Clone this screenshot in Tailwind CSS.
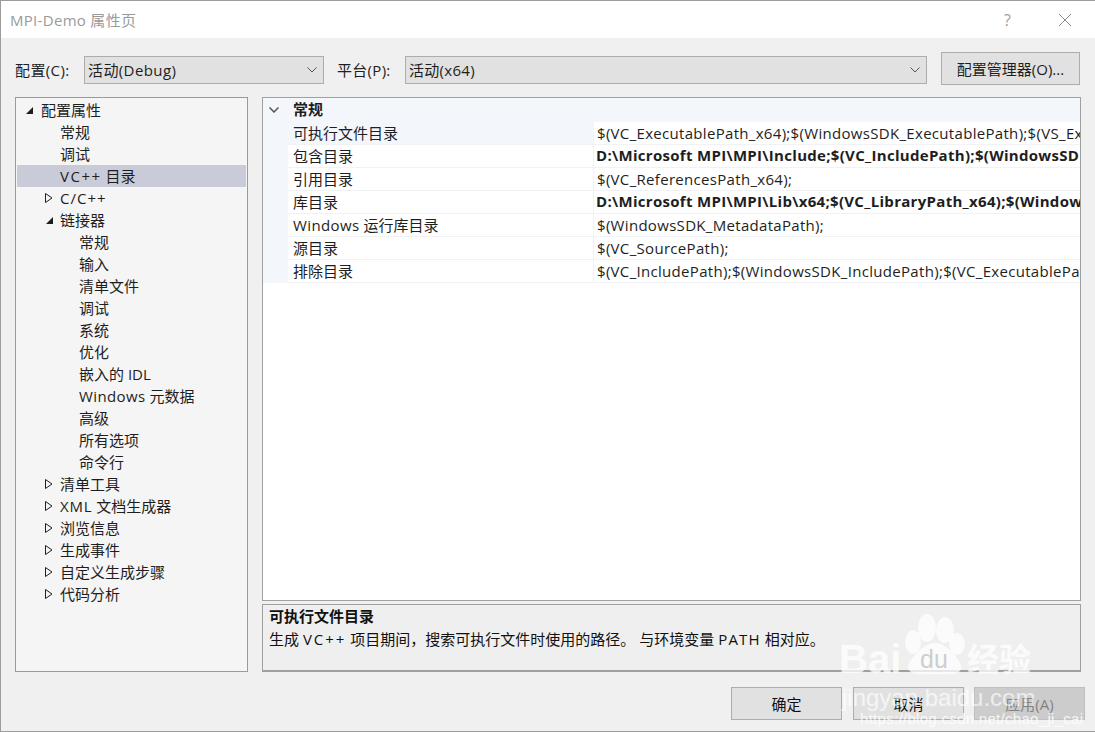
<!DOCTYPE html>
<html><head><meta charset="utf-8"><script src="https://cdn.jsdelivr.net/npm/@tailwindcss/browser@4"></script></head>
<body class="m-0">
<div class="relative w-[1095px] h-[732px] overflow-hidden bg-[#f0f0f0] border border-r-0 border-[#9c9c9c] text-[15px] leading-[22px] text-[#1e1e1e] font-['Open_Sans','Noto_Sans_CJK_SC',sans-serif] flex flex-col">
  <div class="h-[37px] shrink-0 bg-white flex items-center justify-between pl-[9px] pr-[23px]">
    <span class="text-[#9a9a9a] text-[15px] tracking-[0.3px]">MPI-Demo 属性页</span>
    <div class="flex items-center gap-[47px]">
      <span class="text-[#a0a0a0] text-[16px]">?</span>
      <svg class="w-[14px] h-[14px]" viewBox="0 0 14 14"><path d="M1 1 L13 13 M13 1 L1 13" stroke="#8a8a8a" stroke-width="1" fill="none"/></svg>
    </div>
  </div>
  <div class="h-[59px] shrink-0 flex items-center pl-[14px] pt-[4px]">
    <span class="w-[69px] tracking-[0.4px]">配置(C):</span>
    <div class="w-[240px] h-[28px] bg-[#e1e1e1] border border-[#adadad] flex items-center justify-between pl-[3px] pr-[6px]"><span class="tracking-[0.4px]">活动(Debug)</span><svg class="w-[10px] h-[6px]" viewBox="0 0 10 6"><path d="M.5 .5 L5 5 L9.5 .5" stroke="#555" fill="none"/></svg></div>
    <span class="w-[81px] pl-[13px] tracking-[0.3px]">平台(P):</span>
    <div class="w-[522px] h-[28px] bg-[#e1e1e1] border border-[#adadad] flex items-center justify-between pl-[3px] pr-[6px]"><span class="tracking-[0.3px]">活动(x64)</span><svg class="w-[10px] h-[6px]" viewBox="0 0 10 6"><path d="M.5 .5 L5 5 L9.5 .5" stroke="#555" fill="none"/></svg></div>
    <div class="ml-[14px] w-[139px] h-[33px] -mt-[2px] bg-[#e1e1e1] border border-[#adadad] flex items-center justify-center">配置管理器(O)...</div>
  </div>
  <div class="flex-1 flex pl-[14px] gap-[14px] h-[575px]">
    <div class="w-[233px] h-[575px] bg-[#f5f5f5] border border-[#9a9a9a] pt-[1px] pl-[1px] pr-[1px]">
      <div class="h-[22px] flex items-center pl-[8px]"><svg class="w-[9px] h-[9px]" viewBox="0 0 9 9"><path d="M8 1 V8 H1 Z" fill="#1e1e1e"/></svg><span class="ml-[7px]">配置属性</span></div>
      <div class="h-[22px] flex items-center pl-[43px]">常规</div>
      <div class="h-[22px] flex items-center pl-[43px]">调试</div>
      <div class="h-[22px] flex items-center pl-[43px] bg-[#c9cbd8]"><span><span class="tracking-[1.5px]">VC++</span> 目录</span></div>
      <div class="h-[22px] flex items-center pl-[28px]"><svg class="w-[8px] h-[10px]" viewBox="0 0 8 10"><path d="M.5 .5 L7 5 L.5 9.5 Z" stroke="#1e1e1e" fill="none"/></svg><span class="ml-[7px] tracking-[1px]">C/C++</span></div>
      <div class="h-[22px] flex items-center pl-[28px]"><svg class="w-[9px] h-[9px]" viewBox="0 0 9 9"><path d="M8 1 V8 H1 Z" fill="#1e1e1e"/></svg><span class="ml-[6px]">链接器</span></div>
      <div class="h-[22px] flex items-center pl-[62px]">常规</div>
      <div class="h-[22px] flex items-center pl-[62px]">输入</div>
      <div class="h-[22px] flex items-center pl-[62px]">清单文件</div>
      <div class="h-[22px] flex items-center pl-[62px]">调试</div>
      <div class="h-[22px] flex items-center pl-[62px]">系统</div>
      <div class="h-[22px] flex items-center pl-[62px]">优化</div>
      <div class="h-[22px] flex items-center pl-[62px]">嵌入的 IDL</div>
      <div class="h-[22px] flex items-center pl-[62px]"><span><span class="tracking-[0.4px]">Windows</span> 元数据</span></div>
      <div class="h-[22px] flex items-center pl-[62px]">高级</div>
      <div class="h-[22px] flex items-center pl-[62px]">所有选项</div>
      <div class="h-[22px] flex items-center pl-[62px]">命令行</div>
      <div class="h-[22px] flex items-center pl-[28px]"><svg class="w-[8px] h-[10px]" viewBox="0 0 8 10"><path d="M.5 .5 L7 5 L.5 9.5 Z" stroke="#1e1e1e" fill="none"/></svg><span class="ml-[7px]">清单工具</span></div>
      <div class="h-[22px] flex items-center pl-[28px]"><svg class="w-[8px] h-[10px]" viewBox="0 0 8 10"><path d="M.5 .5 L7 5 L.5 9.5 Z" stroke="#1e1e1e" fill="none"/></svg><span class="ml-[7px]"><span class="tracking-[0.8px]">XML</span> 文档生成器</span></div>
      <div class="h-[22px] flex items-center pl-[28px]"><svg class="w-[8px] h-[10px]" viewBox="0 0 8 10"><path d="M.5 .5 L7 5 L.5 9.5 Z" stroke="#1e1e1e" fill="none"/></svg><span class="ml-[7px]">浏览信息</span></div>
      <div class="h-[22px] flex items-center pl-[28px]"><svg class="w-[8px] h-[10px]" viewBox="0 0 8 10"><path d="M.5 .5 L7 5 L.5 9.5 Z" stroke="#1e1e1e" fill="none"/></svg><span class="ml-[7px]">生成事件</span></div>
      <div class="h-[22px] flex items-center pl-[28px]"><svg class="w-[8px] h-[10px]" viewBox="0 0 8 10"><path d="M.5 .5 L7 5 L.5 9.5 Z" stroke="#1e1e1e" fill="none"/></svg><span class="ml-[7px]">自定义生成步骤</span></div>
      <div class="h-[22px] flex items-center pl-[28px]"><svg class="w-[8px] h-[10px]" viewBox="0 0 8 10"><path d="M.5 .5 L7 5 L.5 9.5 Z" stroke="#1e1e1e" fill="none"/></svg><span class="ml-[7px]">代码分析</span></div>
    </div>
    <div class="w-[819px] flex flex-col gap-[3px]">
      <div class="h-[505px] bg-white border border-[#a0a0a0] overflow-hidden">
        <div class="flex h-[24px] bg-[#f3f6fb] items-center">
          <svg class="w-[10px] h-[6px] ml-[6px]" viewBox="0 0 10 6"><path d="M.5 .5 L5 5 L9.5 .5" stroke="#555" stroke-width="1.5" fill="none"/></svg>
          <span class="ml-[14px] font-bold -mt-[2px]">常规</span>
        </div>
        <div class="flex bg-[#f3f6fb]">
          <div class="w-[25px] shrink-0"></div>
          <div class="flex-1">
            <div class="flex h-[23px] border-b border-[#f0f2f6]"><div class="w-[305px] pl-[5px] bg-[#f3f6fb] shrink-0">可执行文件目录</div><div class="flex-1 bg-white pl-[3px] whitespace-nowrap overflow-hidden border-l border-[#f0f2f6] tracking-[0.31px]">$(VC_ExecutablePath_x64);$(WindowsSDK_ExecutablePath);$(VS_ExecutablePath)</div></div>
            <div class="flex h-[23px] border-b border-[#f0f2f6] bg-white"><div class="w-[305px] pl-[5px] shrink-0">包含目录</div><div class="flex-1 pl-[2px] font-bold whitespace-nowrap overflow-hidden border-l border-[#f0f2f6] tracking-[0.3px] -mt-[1px]">D:\Microsoft MPI\MPI\Include;$(VC_IncludePath);$(WindowsSDK_IncludePath)</div></div>
            <div class="flex h-[23px] border-b border-[#f0f2f6] bg-white"><div class="w-[305px] pl-[5px] shrink-0">引用目录</div><div class="flex-1 pl-[3px] whitespace-nowrap overflow-hidden border-l border-[#f0f2f6] tracking-[0.31px]">$(VC_ReferencesPath_x64);</div></div>
            <div class="flex h-[23px] border-b border-[#f0f2f6] bg-white"><div class="w-[305px] pl-[5px] shrink-0">库目录</div><div class="flex-1 pl-[2px] font-bold whitespace-nowrap overflow-hidden border-l border-[#f0f2f6] tracking-[0.3px] -mt-[1px]">D:\Microsoft MPI\MPI\Lib\x64;$(VC_LibraryPath_x64);$(WindowsSDK_LibraryPath)</div></div>
            <div class="flex h-[23px] border-b border-[#f0f2f6] bg-white"><div class="w-[305px] pl-[5px] shrink-0"><span class="tracking-[0.4px]">Windows</span> 运行库目录</div><div class="flex-1 pl-[3px] whitespace-nowrap overflow-hidden border-l border-[#f0f2f6] tracking-[0.31px]">$(WindowsSDK_MetadataPath);</div></div>
            <div class="flex h-[23px] border-b border-[#f0f2f6] bg-white"><div class="w-[305px] pl-[5px] shrink-0">源目录</div><div class="flex-1 pl-[3px] whitespace-nowrap overflow-hidden border-l border-[#f0f2f6] tracking-[0.31px]">$(VC_SourcePath);</div></div>
            <div class="flex h-[23px] border-b border-[#f0f2f6] bg-white"><div class="w-[305px] pl-[5px] shrink-0">排除目录</div><div class="flex-1 pl-[3px] whitespace-nowrap overflow-hidden border-l border-[#f0f2f6] tracking-[0.31px]">$(VC_IncludePath);$(WindowsSDK_IncludePath);$(VC_ExecutablePath_x64)</div></div>
          </div>
        </div>
      </div>
      <div class="h-[68px] bg-[#efefef] border border-[#a0a0a0] border-b-2 pl-[6px] text-[#111]">
        <div class="font-bold">可执行文件目录</div>
        <div class="mt-[1px]">生成 <span class="tracking-[2px]">VC++</span> 项目期间，搜索可执行文件时使用的路径。 与环境变量 <span class="tracking-[1.2px]">PATH</span> 相对应。</div>
      </div>
    </div>
  </div>
  <div class="h-[59px] shrink-0 flex justify-end items-start pt-[15px] pr-[10px] gap-[11px]">
    <div class="w-[111px] h-[33px] bg-[#e1e1e1] border border-[#adadad] flex items-center justify-center text-[#111]">确定</div>
    <div class="w-[111px] h-[33px] bg-[#e1e1e1] border border-[#adadad] flex items-center justify-center text-[#111]">取消</div>
    <div class="w-[111px] h-[33px] -ml-[1px] bg-[#cccccc] border border-[#bfbfbf] flex items-center justify-center text-[#838383]">应用(A)</div>
  </div>
  <div class="absolute left-[-1px] top-[612px] w-[1px] h-[28px] bg-[#2a7ab0]"></div>
  <div class="absolute left-[829px] top-[604px] w-[265px] h-[127px] pointer-events-none">
    <svg class="absolute left-0 top-0" width="265" height="127" viewBox="0 0 265 127"><g fill="#ffffff" fill-opacity=".75"><ellipse cx="97" cy="23" rx="9" ry="14"/><ellipse cx="115" cy="25" rx="9" ry="13"/><ellipse cx="83" cy="37" rx="8" ry="12"/><ellipse cx="127" cy="39" rx="8" ry="11"/><path d="M105 38 C116 38 128 52 131 60 C133 70 122 70 105 69 C88 70 77 70 78 60 C82 52 94 38 105 38Z"/></g></svg>
    <span class="absolute left-[9px] top-[31px] text-[40px] leading-[46px] text-white/75 font-['Liberation_Sans'] font-bold">Bai</span>
    <span class="absolute left-[90px] top-[40px] text-[25px] leading-[29px] text-[#c8c8c8]/90 font-['Liberation_Sans']">du</span>
    <span class="absolute left-[137px] top-[35px] text-[32px] leading-[38px] font-bold text-white/75">经验</span>
    <span class="absolute left-[12px] top-[79px] text-[24px] leading-[28px] text-white/65 font-['Liberation_Sans']">jingyan.baidu.com</span>
    <span class="absolute left-[30px] top-[105px] text-[15px] leading-[17px] text-white/80 font-['Liberation_Sans'] tracking-[0.3px]">https://blog.csdn.net/chao_ji_cai</span>
  </div>
</div>
</body></html>
